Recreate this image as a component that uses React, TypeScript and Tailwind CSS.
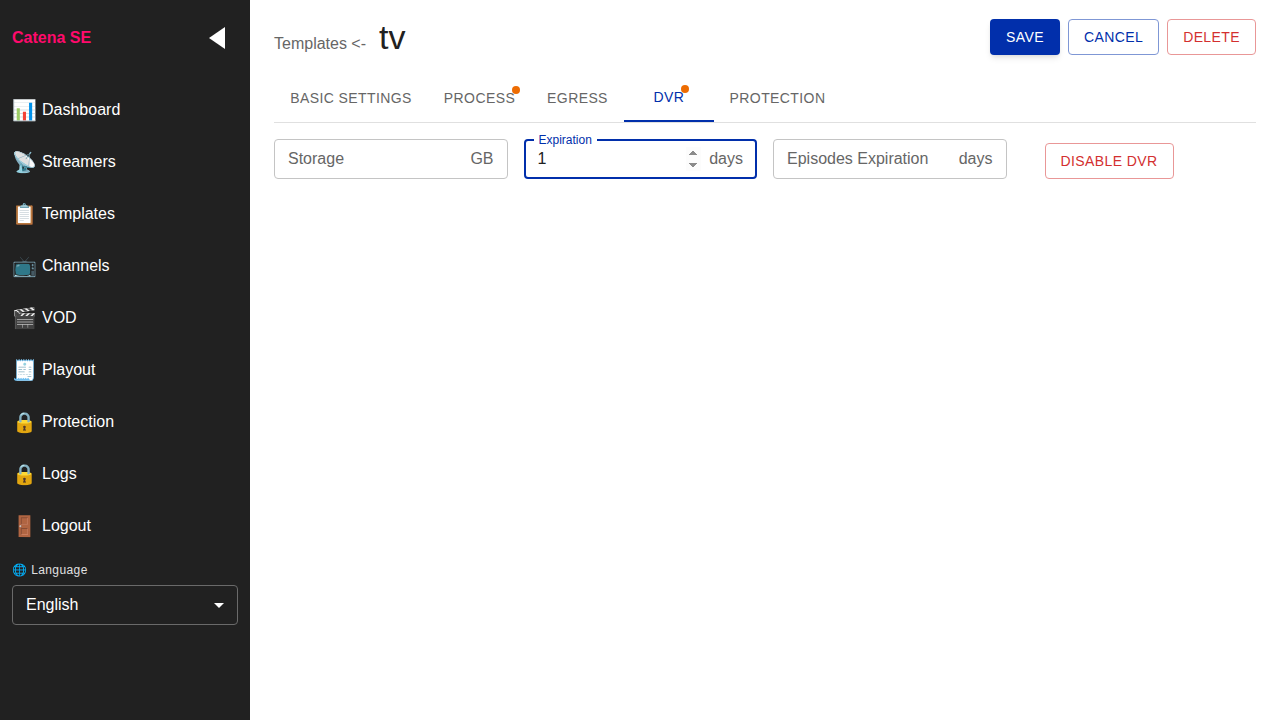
const menu = [
  ["📊", "Dashboard"],
  ["📡", "Streamers"],
  ["📋", "Templates"],
  ["📺", "Channels"],
  ["🎬", "VOD"],
  ["🧾", "Playout"],
  ["🔒", "Protection"],
  ["🔒", "Logs"],
  ["🚪", "Logout"],
];

const tabs = [
  { label: "BASIC SETTINGS", w: "w-[154px]", dot: false, active: false },
  { label: "PROCESS", w: "w-[103px]", dot: true, active: false },
  { label: "EGRESS", w: "w-[93px]", dot: false, active: false },
  { label: "DVR", w: "w-[90px]", dot: true, active: true },
  { label: "PROTECTION", w: "w-[127px]", dot: false, active: false },
];

function Sidebar() {
  return (
    <aside className="w-[250px] h-[720px] shrink-0 bg-[#212121] flex flex-col px-3">
      <div className="h-[76px] flex items-center justify-between pr-[12px]">
        <span className="text-[16px] font-bold text-[#ff0a6c]">Catena SE</span>
        <svg width="17" height="22" viewBox="0 0 17 22">
          <path d="M0 11 L16 0 V22 Z" fill="#fff" />
        </svg>
      </div>
      <nav className="flex flex-col mt-2">
        {menu.map(([icon, label]) => (
          <div key={label} className="h-[52px] flex items-center gap-2 text-[16px] text-white">
            <span className="w-[22px] text-[20px] leading-none text-center">{icon}</span>
            <span>{label}</span>
          </div>
        ))}
      </nav>
      <div className="mt-[9px] h-[18px] flex items-center text-[12px] text-[#e0e0e0] tracking-[0.4px]">🌐 Language</div>
      <div className="mt-[6px] h-[40px] w-[226px] border border-[#6a6a6a] rounded flex items-center justify-between pl-[13px] pr-[13px] text-[16px] text-white">
        <span>English</span>
        <svg width="10" height="5" viewBox="0 0 10 5"><path d="M0 0 H10 L5 5 Z" fill="#fff" /></svg>
      </div>
    </aside>
  );
}

function Field({ label, unit }: { label: string; unit: string }) {
  return (
    <div className="w-[233.5px] h-[40px] border border-[#c4c4c4] rounded flex items-center justify-between px-[13px] text-[16px] text-[#666]">
      <span>{label}</span>
      <span>{unit}</span>
    </div>
  );
}

function Outline({ children, tone }: { children: string; tone: "blue" | "red" }) {
  const cls = tone === "blue" ? "border-[#7f97d5] text-[#012fab]" : "border-[#e99797] text-[#d32f2f]";
  return (
    <button className={`h-[36px] px-[15px] border rounded text-[14px] tracking-[0.4px] bg-white ${cls}`}>{children}</button>
  );
}

export default function App() {
  return (
    <div className="w-[1280px] h-[720px] flex bg-white overflow-hidden font-['Liberation_Sans',Arial,sans-serif]">
      <Sidebar />
      <main className="flex-1 px-6 flex flex-col">
        <div className="h-[74px] flex items-start justify-between">
          <div className="flex items-baseline pt-[16px] text-[#666]">
            <span className="text-[16px]">Templates &lt;-</span>
            <span className="ml-[13px] text-[34px] leading-[42px] text-[#212121]">tv</span>
          </div>
          <div className="flex gap-2 pt-[19px]">
            <button className="h-[36px] w-[70px] rounded bg-[#012fab] text-white text-[14px] tracking-[0.4px] shadow-md">SAVE</button>
            <Outline tone="blue">CANCEL</Outline>
            <Outline tone="red">DELETE</Outline>
          </div>
        </div>
        <div className="h-[49px] flex border-b border-[#e0e0e0]">
          {tabs.map((t) => (
            <div
              key={t.label}
              className={`${t.w} h-[48px] relative flex items-center justify-center text-[14px] tracking-[0.4px] ${t.active ? "text-[#012fab] border-b-2 border-[#012fab]" : "text-[#666]"}`}
            >
              <span className="relative">
                {t.label}
                {t.dot && <span className="absolute -top-[2px] -right-[5px] w-2 h-2 rounded-full bg-[#ed6c02]" />}
              </span>
            </div>
          ))}
        </div>
        <div className="flex items-start gap-4 mt-4">
          <Field label="Storage" unit="GB" />
          <div className="relative w-[233.5px] h-[40px] border-2 border-[#012fab] rounded flex items-center pl-[12px] pr-[12px] text-[16px]">
            <span className="absolute -top-[9px] left-[8px] px-[5px] bg-white text-[12px] leading-[16px] text-[#012fab]">Expiration</span>
            <input
              type="number"
              defaultValue={1}
              autoFocus
              className="flex-1 min-w-0 outline-none caret-transparent text-[#212121]"
            />
            <span className="ml-2 text-[#666]">days</span>
          </div>
          <Field label="Episodes Expiration" unit="days" />
          <div className="ml-[22px] mt-1">
            <Outline tone="red">DISABLE DVR</Outline>
          </div>
        </div>
      </main>
    </div>
  );
}
